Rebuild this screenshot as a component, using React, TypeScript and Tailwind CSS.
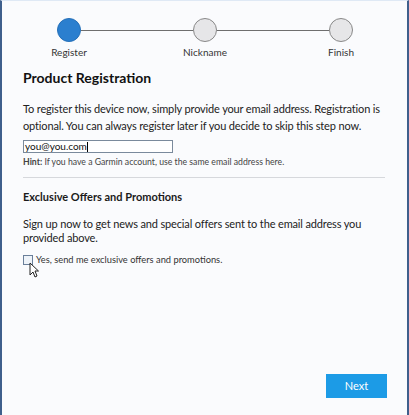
import React from "react";

export default function App() {
  const font = { fontFamily: 'Lato, "Open Sans", Arial, sans-serif' };
  return (
    <div
      className="relative w-[409px] h-[415px] bg-[#fafbfd] border-l-2 border-r-2 border-t border-l-[#3f5f8c] border-r-[#3f5f8c] border-t-[#dfe9f5] text-[#1e1e1e]"
      style={font}
    >
      {/* Stepper */}
      <div className="flex items-center pt-[17px] pl-[55px] pr-[54px]">
        <div className="w-[24px] h-[24px] rounded-full bg-[#2b7fcf] border border-[#2670b8]" />
        <div className="flex-1 h-px bg-[#6e6e6e]" />
        <div className="w-[24px] h-[24px] rounded-full bg-[#e6e6e8] border border-[#888]" />
        <div className="flex-1 h-px bg-[#6e6e6e]" />
        <div className="w-[24px] h-[24px] rounded-full bg-[#e6e6e8] border border-[#888]" />
      </div>
      <div className="flex justify-between pl-[35px] pr-[34px] mt-[3px] text-[10px] leading-[14px] text-[#333]">
        <div className="w-[64px] text-center">Register</div>
        <div className="w-[64px] text-center">Nickname</div>
        <div className="w-[64px] text-center">Finish</div>
      </div>

      <div className="pl-[21px] pr-[20px]">
        <h1 className="mt-[9px] text-[14px] leading-[20px] font-bold text-[#111]">Product Registration</h1>

        <p className="mt-[12px] text-[11px] leading-[17px] tracking-[-0.15px] text-[#222]">
          To register this device now, simply provide your email address. Registration is optional. You can always register later if you decide to skip this step now.
        </p>

        <div className="mt-[6px] w-[150px] h-[13px] border border-[#7a8a9c] bg-white flex items-center pl-[1px] text-[10px] leading-[11px] text-[#111]">
          you@you.com<span className="inline-block w-px h-[10px] bg-black" />
        </div>
        <div className="mt-[3px] text-[8.7px] leading-[12px] text-[#444] whitespace-nowrap">
          <span className="font-bold">Hint:</span> If you have a Garmin account, use the same email address here.
        </div>

        <div className="mt-[9px] h-px bg-[#d6d8dc] mr-[2px]" />

        <h2 className="mt-[11px] text-[11px] leading-[16px] font-bold text-[#1a1a1a]">Exclusive Offers and Promotions</h2>

        <p className="mt-[12px] text-[11px] leading-[13.5px] tracking-[-0.15px] text-[#222]">
          Sign up now to get news and special offers sent to the email address you provided above.
        </p>

        <div className="mt-[10px] flex items-center gap-[3px]">
          <div className="w-[10px] h-[10px] border border-[#6a7f9a] bg-[#eef3f9]" />
          <span className="text-[9.3px] leading-[12px] text-[#333]">Yes, send me exclusive offers and promotions.</span>
        </div>
      </div>

      {/* mouse cursor */}
      <svg className="absolute left-[27px] top-[261px]" width="10" height="16" viewBox="0 0 10 16">
        <path d="M1 1 L1 13 L4 10 L6 15 L8 14 L6 9 L9.5 9 Z" fill="white" stroke="#222" strokeWidth="1" strokeLinejoin="round" />
      </svg>

      <button className="absolute left-[324px] top-[373px] w-[61px] h-[24px] bg-[#1c9be6] text-white text-[11px] leading-[24px] text-center">
        Next
      </button>
    </div>
  );
}
